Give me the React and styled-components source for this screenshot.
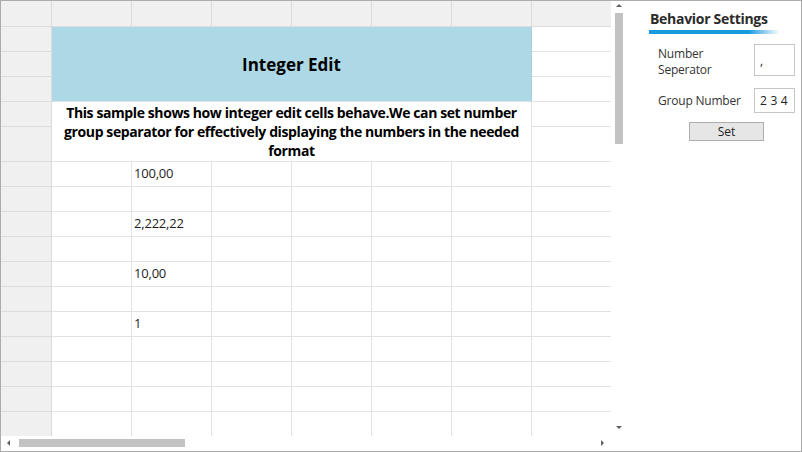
import React from "react";
import styled, { createGlobalStyle } from "styled-components";

const Global = createGlobalStyle`
  html, body { margin: 0; padding: 0; background: #fff; }
  body { font-family: "Open Sans", "Noto Sans", sans-serif; }
  * { box-sizing: border-box; }
`;

const Frame = styled.div`
  width: 802px;
  height: 452px;
  border: 1px solid #acacac;
  display: flex;
  background: #fff;
  overflow: hidden;
`;

const SheetArea = styled.div`
  width: 626px;
  display: grid;
  grid-template-columns: 610px 16px;
  grid-template-rows: 435px 15px;
`;

const Sheet = styled.div`
  display: grid;
  grid-template-columns: 51px repeat(7, 80px);
  grid-template-rows: 26px repeat(4, 25px) 35px repeat(11, 25px);
  overflow: hidden;
  height: 435px;
`;

const HeaderCell = styled.div`
  background: #f0f0f0;
  border-right: 1px solid #dcdcdc;
  border-bottom: 1px solid #dcdcdc;
`;

const Cell = styled.div`
  border-right: 1px solid #e2e2e2;
  border-bottom: 1px solid #e2e2e2;
  font-size: 13px;
  color: #1e1e1e;
  padding: 2px 0 0 2px;
  line-height: 18px;
  font-family: "Open Sans", sans-serif;
  letter-spacing: -0.2px;
  white-space: nowrap;
`;

const TitleCell = styled.div`
  grid-column: 2 / 8;
  grid-row: 2 / 5;
  background: #add8e6;
  border-right: 1px solid #a4cfdd;
  border-bottom: 1px solid #e2e2e2;
  display: flex;
  align-items: center;
  justify-content: center;
  font-weight: 700;
  font-size: 17px;
  color: #000;
  padding-top: 1px;
  letter-spacing: 0;
`;

const DescCell = styled.div`
  grid-column: 2 / 8;
  grid-row: 5 / 7;
  border-right: 1px solid #e2e2e2;
  border-bottom: 1px solid #e2e2e2;
  text-align: center;
  font-weight: 700;
  font-size: 14px;
  line-height: 19px;
  color: #000;
  padding: 1px 3px 0;
  letter-spacing: -0.4px;
`;

const VScroll = styled.div`
  display: flex;
  flex-direction: column;
  align-items: center;
  padding-top: 3px;
`;

const VThumb = styled.div`
  width: 8px;
  height: 131px;
  background: #c2c2c2;
  margin-top: 6px;
`;

const Arrow = styled.div`
  width: 0;
  height: 0;
  border-style: solid;
  ${(p) =>
    p.dir === "up"
      ? "border-width: 0 3px 3px 3px; border-color: transparent transparent #606060 transparent;"
      : p.dir === "down"
      ? "border-width: 3px 3px 0 3px; border-color: #606060 transparent transparent transparent;"
      : p.dir === "left"
      ? "border-width: 3px 3px 3px 0; border-color: transparent #606060 transparent transparent;"
      : "border-width: 3px 0 3px 3px; border-color: transparent transparent transparent #606060;"}
`;

const DownArrowWrap = styled.div`
  margin-top: auto;
  margin-bottom: 7px;
`;

const HScroll = styled.div`
  display: flex;
  align-items: center;
  padding-left: 6px;
  padding-right: 7px;
  padding-bottom: 1px;
`;

const HThumb = styled.div`
  width: 166px;
  height: 8px;
  background: #c2c2c2;
  margin-left: 9px;
`;

const RightArrowWrap = styled.div`
  margin-left: auto;
  margin-top: -1px;
`;

const Corner = styled.div``;

const Panel = styled.div`
  flex: 1;
  padding: 9px 0 0 23px;
  font-family: "Open Sans", sans-serif;
`;

const PanelTitle = styled.div`
  font-size: 14px;
  font-weight: 700;
  color: #2b2b2b;
  line-height: 18px;
  letter-spacing: -0.3px;
`;

const TitleBar = styled.div`
  width: 131px;
  height: 4px;
  margin-top: 2px;
  margin-left: -1px;
  background: linear-gradient(to right, #1a9be0 0%, #1a9be0 76%, rgba(26, 155, 224, 0) 100%);
`;

const FieldRow = styled.div`
  display: flex;
  align-items: ${(p) => (p.top ? "flex-start" : "center")};
  margin-top: ${(p) => p.mt}px;
  padding-left: 8px;
`;

const Label = styled.div`
  width: 96px;
  font-size: 12px;
  line-height: 16px;
  color: #333;
  letter-spacing: -0.2px;
  padding-top: ${(p) => p.pt || 0}px;
`;

const InputBox = styled.div`
  width: 41px;
  height: ${(p) => p.h}px;
  border: 1px solid #c6c6c6;
  font-size: 12px;
  color: #222;
  padding-left: 5px;
  display: flex;
  align-items: center;
  letter-spacing: 0.2px;
`;

const Button = styled.div`
  width: 75px;
  height: 19px;
  margin: 9px 0 0 39px;
  background: #e6e6e6;
  border: 1px solid #adadad;
  font-size: 12px;
  color: #222;
  display: flex;
  align-items: center;
  justify-content: center;
`;

const numbers = { 7: "100,00", 9: "2,222,22", 11: "10,00", 13: "1" };

export default function App() {
  const cells = [];
  cells.push(<HeaderCell key="corner" />);
  for (let c = 0; c < 7; c++) cells.push(<HeaderCell key={"h" + c} />);
  for (let r = 2; r <= 17; r++) {
    cells.push(<HeaderCell key={"r" + r} style={{ gridRow: r, gridColumn: 1 }} />);
    for (let c = 2; c <= 8; c++) {
      const covered = r >= 2 && r <= 6 && c <= 7;
      if (covered) continue;
      cells.push(
        <Cell key={r + "-" + c} style={{ gridRow: r, gridColumn: c }}>
          {c === 3 && numbers[r] ? numbers[r] : null}
        </Cell>
      );
    }
  }
  return (
    <>
      <Global />
      <Frame>
        <SheetArea>
          <Sheet>
            {cells}
            <TitleCell>Integer Edit</TitleCell>
            <DescCell>
              This sample shows how integer edit cells behave.We can set number group separator for effectively displaying the numbers in the needed format
            </DescCell>
          </Sheet>
          <VScroll>
            <Arrow dir="up" />
            <VThumb />
            <DownArrowWrap>
              <Arrow dir="down" />
            </DownArrowWrap>
          </VScroll>
          <HScroll>
            <Arrow dir="left" />
            <HThumb />
            <RightArrowWrap>
              <Arrow dir="right" />
            </RightArrowWrap>
          </HScroll>
          <Corner />
        </SheetArea>
        <Panel>
          <PanelTitle>Behavior Settings</PanelTitle>
          <TitleBar />
          <FieldRow mt={10} top>
            <Label pt={2}>Number<br />Seperator</Label>
            <InputBox h={32}>,</InputBox>
          </FieldRow>
          <FieldRow mt={10}>
            <Label>Group Number</Label>
            <InputBox h={25}>2 3 4</InputBox>
          </FieldRow>
          <Button>Set</Button>
        </Panel>
      </Frame>
    </>
  );
}
